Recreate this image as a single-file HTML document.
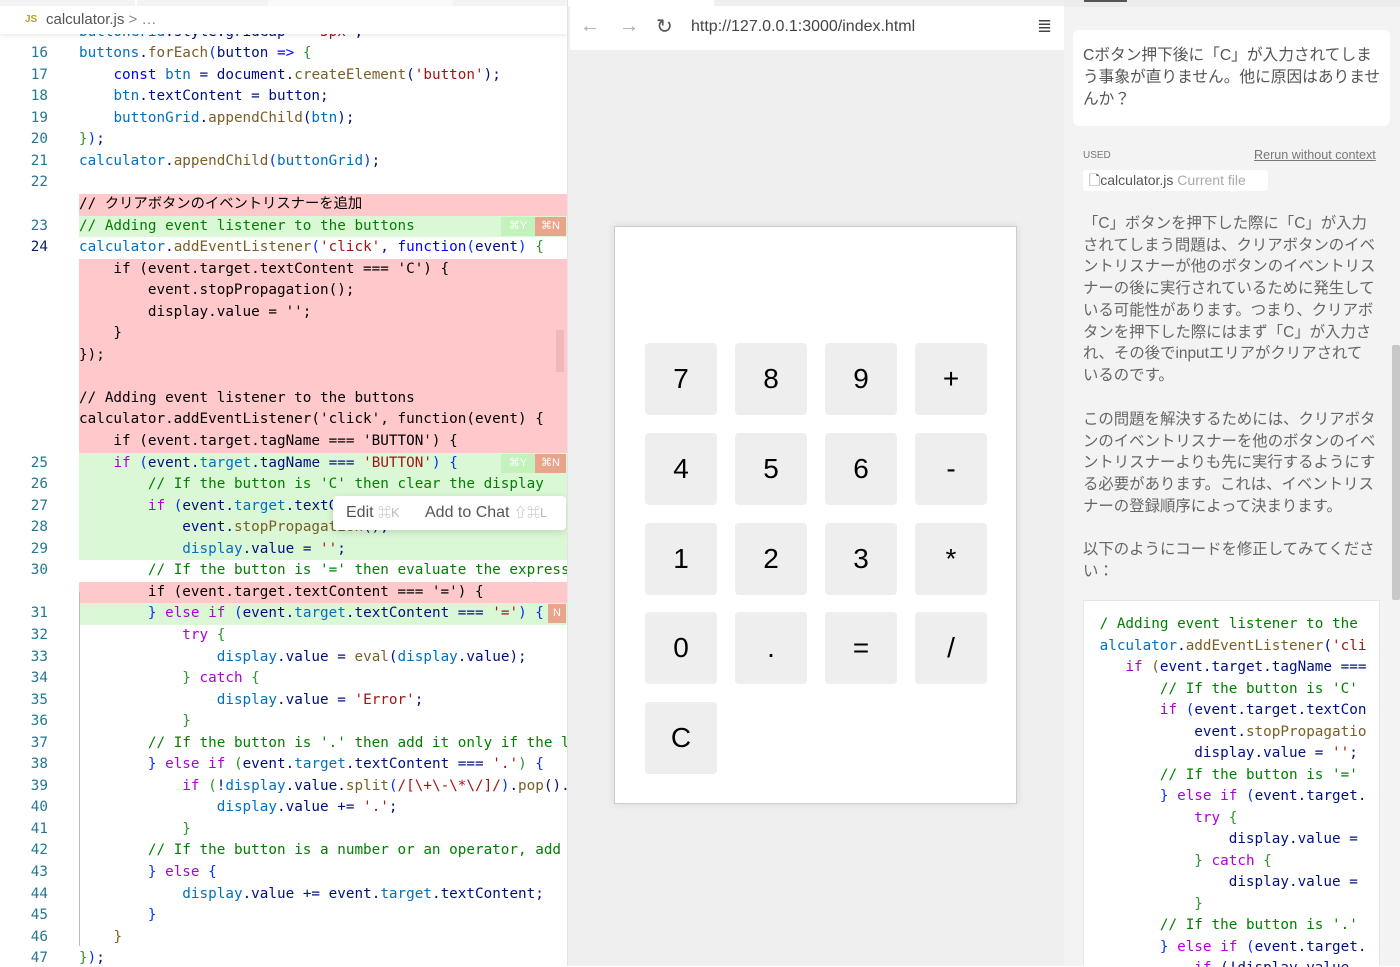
<!DOCTYPE html>
<html><head><meta charset="utf-8"><style>
*{margin:0;padding:0;box-sizing:border-box}
body{width:1400px;height:966px;overflow:hidden;background:#fff;font-family:"Liberation Sans","Noto Sans CJK JP",sans-serif;position:relative}
.mono{font-family:"DejaVu Sans Mono","Liberation Mono","Noto Sans CJK JP",monospace}
#ed{position:absolute;left:0;top:0;width:567px;height:966px;overflow:hidden;background:#fff}
.row{position:absolute;left:0;width:567px;height:21.55px;line-height:21.55px;font-size:14.3px;white-space:pre;color:#001080;font-family:"DejaVu Sans Mono","Liberation Mono","Noto Sans CJK JP",monospace}
.row .n{position:absolute;left:0;width:48px;text-align:right;color:#237893}
.row .c{position:absolute;left:79px;right:0;top:0;height:100%;overflow:hidden}
.del .c{background:#ffc9cc}
.add .c{background:#dbf8d6}
.k{color:#0000ff}.p{color:#af00db}.f{color:#795e26}.s{color:#a31515}.cm{color:#008000}.v{color:#0070c1}.d{color:#001080}.t{color:#267f99}.g{color:#319331}.b{color:#0431fa}.x{color:#000}
.badge{position:absolute;height:19px;top:1px;font-size:11px;line-height:19px;color:#fff;text-align:center;font-family:"Liberation Sans",sans-serif}
#crumb{position:absolute;left:0;top:6px;width:567px;height:28px;background:#fff;box-shadow:0 2px 4px rgba(0,0,0,.08);z-index:5;font-size:15px;color:#555;line-height:28px}
#tabs{position:absolute;left:0;top:0;width:567px;height:6px;background:#f3f3f3;z-index:6}
#br{position:absolute;left:567px;top:0;width:497px;height:966px;background:#efefef;border-left:1px solid #e4e4e4}
#bar{position:absolute;left:2px;top:6px;width:495px;height:44px;background:#fff}
#calc{position:absolute;left:46px;top:226px;width:403px;height:578px;background:#fff;border:1px solid #ccc;box-shadow:0 0 8px rgba(0,0,0,.1)}
.bt{position:absolute;width:72px;height:72px;background:#eee;border-radius:4px;font-size:28px;text-align:center;line-height:72px;color:#000}
#rp{position:absolute;left:1064px;top:0;width:336px;height:966px;background:#f3f3f3}
.ans{position:absolute;left:19px;font-size:15.4px;color:#666;line-height:21.7px;white-space:nowrap}
.rc{position:absolute;left:8px;height:21.5px;line-height:21.5px;font-size:14.3px;white-space:pre;color:#001080}
</style></head><body>
<div id="ed">
<div id="tabs"><div style="position:absolute;left:135px;top:0;width:2px;height:6px;background:#fff"></div><div style="position:absolute;left:268px;top:0;width:185px;height:6px;background:#fafafa"></div></div>
<div id="crumb"><span style="position:absolute;left:25px;top:0;font-size:10px;font-weight:bold;color:#b5a02a">JS</span><span style="position:absolute;left:46px">calculator.js <span style="color:#888">&gt; …</span></span></div>
<div style="position:absolute;left:0;top:21.6px;width:567px">
<div class="row" style="top:0"><span class="c"><span class="v">buttonGrid</span>.<span class="d">style</span>.<span class="d">gridGap</span> = <span class="s">'5px'</span>;</span></div>
<div class="row" style="top:21.55px"><span class="n">16</span><span class="c"><span class="v">buttons</span>.<span class="f">forEach</span><span class="b">(</span><span class="d">button</span> <span class="k">=&gt;</span> <span class="g">{</span></span></div>
<div class="row" style="top:43.1px"><span class="n">17</span><span class="c">    <span class="k">const</span> <span class="v">btn</span> = <span class="d">document</span>.<span class="f">createElement</span>(<span class="s">'button'</span>);</span></div>
<div class="row" style="top:64.65px"><span class="n">18</span><span class="c">    <span class="v">btn</span>.<span class="d">textContent</span> = <span class="d">button</span>;</span></div>
<div class="row" style="top:86.2px"><span class="n">19</span><span class="c">    <span class="v">buttonGrid</span>.<span class="f">appendChild</span>(<span class="v">btn</span>);</span></div>
<div class="row" style="top:107.75px"><span class="n">20</span><span class="c"><span class="g">}</span><span class="b">)</span>;</span></div>
<div class="row" style="top:129.3px"><span class="n">21</span><span class="c"><span class="v">calculator</span>.<span class="f">appendChild</span><span class="b">(</span><span class="v">buttonGrid</span><span class="b">)</span>;</span></div>
<div class="row" style="top:150.85px"><span class="n">22</span><span class="c"></span></div>
<div class="row del" style="top:172.4px"><span class="c x">// クリアボタンのイベントリスナーを追加</span></div>
<div class="row add" style="top:193.95px"><span class="n">23</span><span class="c cm">// Adding event listener to the buttons</span><span class="badge" style="left:501px;width:34px;background:#c3f2bc">⌘Y</span><span class="badge" style="left:535px;width:31px;background:#e9a58c">⌘N</span></div>
<div class="row" style="top:215.5px"><span class="n" style="color:#0b216f">24</span><span class="c"><span class="v">calculator</span>.<span class="f">addEventListener</span><span class="b">(</span><span class="s">'click'</span>, <span class="k">function</span><span class="b">(</span><span class="d">event</span><span class="b">)</span> <span class="g">{</span></span></div>
<div class="row del" style="top:237.05px"><span class="c x">    if (event.target.textContent === 'C') {</span></div>
<div class="row del" style="top:258.6px"><span class="c x">        event.stopPropagation();</span></div>
<div class="row del" style="top:280.15px"><span class="c x">        display.value = '';</span></div>
<div class="row del" style="top:301.7px"><span class="c x">    }</span></div>
<div class="row del" style="top:323.25px"><span class="c x">});</span></div>
<div class="row del" style="top:344.8px"><span class="c x"></span></div>
<div class="row del" style="top:366.35px"><span class="c x">// Adding event listener to the buttons</span></div>
<div class="row del" style="top:387.9px"><span class="c x">calculator.addEventListener('click', function(event) {</span></div>
<div class="row del" style="top:409.45px"><span class="c x">    if (event.target.tagName === 'BUTTON') {</span></div>
<div class="row add" style="top:431px"><span class="n">25</span><span class="c">    <span class="p">if</span> <span class="b">(</span><span class="d">event</span>.<span class="v">target</span>.<span class="d">tagName</span> === <span class="s">'BUTTON'</span><span class="b">)</span> <span class="b">{</span></span><span class="badge" style="left:501px;width:34px;background:#c3f2bc">⌘Y</span><span class="badge" style="left:535px;width:31px;background:#e9a58c">⌘N</span></div>
<div class="row add" style="top:452.55px"><span class="n">26</span><span class="c">        <span class="cm">// If the button is 'C' then clear the display</span></span></div>
<div class="row add" style="top:474.1px"><span class="n">27</span><span class="c">        <span class="p">if</span> <span class="b">(</span><span class="d">event</span>.<span class="v">target</span>.<span class="d">textContent</span> === <span class="s">'C'</span><span class="b">)</span> <span class="b">{</span></span></div>
<div class="row add" style="top:495.65px"><span class="n">28</span><span class="c">            <span class="d">event</span>.<span class="f">stopPropagation</span>();</span></div>
<div class="row add" style="top:517.2px"><span class="n">29</span><span class="c">            <span class="v">display</span>.<span class="d">value</span> = <span class="s">''</span>;</span></div>
<div class="row" style="top:538.75px"><span class="n">30</span><span class="c">        <span class="cm">// If the button is '=' then evaluate the expression</span></span></div>
<div class="row del" style="top:560.3px"><span class="c x">        if (event.target.textContent === '=') {</span></div>
<div class="row add" style="top:581.85px"><span class="n">31</span><span class="c">        <span class="b">}</span> <span class="p">else if</span> <span class="b">(</span><span class="d">event</span>.<span class="v">target</span>.<span class="d">textContent</span> === <span class="s">'='</span><span class="b">)</span> <span class="b">{</span></span><span class="badge" style="left:548px;width:18px;background:#e9a58c">N</span></div>
<div class="row" style="top:603.4px"><span class="n">32</span><span class="c">            <span class="p">try</span> <span class="g">{</span></span></div>
<div class="row" style="top:624.95px"><span class="n">33</span><span class="c">                <span class="v">display</span>.<span class="d">value</span> = <span class="f">eval</span>(<span class="v">display</span>.<span class="d">value</span>);</span></div>
<div class="row" style="top:646.5px"><span class="n">34</span><span class="c">            <span class="g">}</span> <span class="p">catch</span> <span class="g">{</span></span></div>
<div class="row" style="top:668.05px"><span class="n">35</span><span class="c">                <span class="v">display</span>.<span class="d">value</span> = <span class="s">'Error'</span>;</span></div>
<div class="row" style="top:689.6px"><span class="n">36</span><span class="c">            <span class="g">}</span></span></div>
<div class="row" style="top:711.15px"><span class="n">37</span><span class="c">        <span class="cm">// If the button is '.' then add it only if the last</span></span></div>
<div class="row" style="top:732.7px"><span class="n">38</span><span class="c">        <span class="b">}</span> <span class="p">else if</span> <span class="g">(</span><span class="d">event</span>.<span class="v">target</span>.<span class="d">textContent</span> === <span class="s">'.'</span><span class="g">)</span> <span class="b">{</span></span></div>
<div class="row" style="top:754.25px"><span class="n">39</span><span class="c">            <span class="p">if</span> <span class="g">(</span>!<span class="v">display</span>.<span class="d">value</span>.<span class="f">split</span><span class="b">(</span><span class="s">/[\+\-\*\/]/</span><span class="b">)</span>.<span class="f">pop</span>().includes</span></div>
<div class="row" style="top:775.8px"><span class="n">40</span><span class="c">                <span class="v">display</span>.<span class="d">value</span> += <span class="s">'.'</span>;</span></div>
<div class="row" style="top:797.35px"><span class="n">41</span><span class="c">            <span class="g">}</span></span></div>
<div class="row" style="top:818.9px"><span class="n">42</span><span class="c">        <span class="cm">// If the button is a number or an operator, add it</span></span></div>
<div class="row" style="top:840.45px"><span class="n">43</span><span class="c">        <span class="b">}</span> <span class="p">else</span> <span class="b">{</span></span></div>
<div class="row" style="top:862px"><span class="n">44</span><span class="c">            <span class="v">display</span>.<span class="d">value</span> += <span class="d">event</span>.<span class="v">target</span>.<span class="d">textContent</span>;</span></div>
<div class="row" style="top:883.55px"><span class="n">45</span><span class="c">        <span class="b">}</span></span></div>
<div class="row" style="top:905.1px"><span class="n">46</span><span class="c">    <span class="f">}</span></span></div>
<div class="row" style="top:926.65px"><span class="n">47</span><span class="c"><span class="g">}</span><span class="b">)</span>;</span></div>
</div>
<div style="position:absolute;left:79px;top:592px;width:1px;height:354px;background:#bbb"></div>
<div style="position:absolute;left:556px;top:330px;width:8px;height:42px;background:#f0b8b8"></div>
<div style="position:absolute;left:333px;top:496px;width:233px;height:34px;background:#fff;border-radius:4px;box-shadow:0 2px 8px rgba(0,0,0,.15);font-size:16px;line-height:34px;color:#555;z-index:7"><span style="position:absolute;left:13px">Edit <span style="color:#bbb;font-size:13px">⌘K</span></span><span style="position:absolute;left:92px">Add to Chat <span style="color:#bbb;font-size:13px">⇧⌘L</span></span></div>
</div>
<div id="br">
<div style="position:absolute;left:0;top:0;width:146px;height:6px;background:#fff"></div>
<div id="bar">
<span style="position:absolute;left:10px;top:9px;font-size:20px;color:#aaa">←</span>
<span style="position:absolute;left:49px;top:9px;font-size:20px;color:#aaa">→</span>
<span style="position:absolute;left:86px;top:8px;font-size:20px;color:#555">↻</span>
<span style="position:absolute;left:121px;top:12px;font-size:16px;color:#444">http://127.0.0.1:3000/index.html</span>
<span style="position:absolute;left:467px;top:10px;font-size:18px;color:#444">≣</span>
</div>
<div id="calc">
<div class="bt" style="left:30px;top:116px">7</div><div class="bt" style="left:120px;top:116px">8</div><div class="bt" style="left:210px;top:116px">9</div><div class="bt" style="left:300px;top:116px">+</div>
<div class="bt" style="left:30px;top:206px">4</div><div class="bt" style="left:120px;top:206px">5</div><div class="bt" style="left:210px;top:206px">6</div><div class="bt" style="left:300px;top:206px">-</div>
<div class="bt" style="left:30px;top:296px">1</div><div class="bt" style="left:120px;top:296px">2</div><div class="bt" style="left:210px;top:296px">3</div><div class="bt" style="left:300px;top:296px">*</div>
<div class="bt" style="left:30px;top:385px">0</div><div class="bt" style="left:120px;top:385px">.</div><div class="bt" style="left:210px;top:385px">=</div><div class="bt" style="left:300px;top:385px">/</div>
<div class="bt" style="left:30px;top:475px">C</div>
</div>
</div>
<div id="rp">
<div style="position:absolute;left:0;top:0;width:336px;height:7px;background:#ececec"></div>
<div style="position:absolute;left:20px;top:0;width:43px;height:2px;background:#555"></div>
<div style="position:absolute;left:9px;top:30px;width:317px;height:96px;background:#fff;border-radius:6px"></div>
<div style="position:absolute;left:19px;top:45px;font-size:15.7px;line-height:22px;color:#555;white-space:nowrap">Cボタン押下後に「C」が入力されてしま<br>う事象が直りません。他に原因はありませ<br>んか？</div>
<div style="position:absolute;left:19px;top:150px;font-size:10px;color:#777">USED</div>
<div style="position:absolute;left:190px;top:148px;font-size:12.6px;color:#777;text-decoration:underline">Rerun without context</div>
<div style="position:absolute;left:19px;top:170px;width:185px;height:21px;background:#fff;border-radius:3px;font-size:14px;line-height:21px;color:#555;padding-left:6px;white-space:nowrap">🗋calculator.js <span style="color:#aaa">Current file</span></div>
<div class="ans" style="top:213px">「C」ボタンを押下した際に「C」が入力<br>されてしまう問題は、クリアボタンのイベ<br>ントリスナーが他のボタンのイベントリス<br>ナーの後に実行されているために発生して<br>いる可能性があります。つまり、クリアボ<br>タンを押下した際にはまず「C」が入力さ<br>れ、その後でinputエリアがクリアされて<br>いるのです。</div>
<div class="ans" style="top:409px">この問題を解決するためには、クリアボタ<br>ンのイベントリスナーを他のボタンのイベ<br>ントリスナーよりも先に実行するようにす<br>る必要があります。これは、イベントリス<br>ナーの登録順序によって決まります。</div>
<div class="ans" style="top:539px">以下のようにコードを修正してみてくださ<br>い：</div>
<div style="position:absolute;left:19px;top:600px;width:297px;height:366px;background:#fff;border:1px solid #e6e6e6;border-bottom:none">
<div class="mono" style="position:absolute;left:15px;top:13px;width:268px;height:353px;overflow:hidden">
<div class="rc" style="top:0;left:-8px"><span class="cm">// Adding event listener to the buttons</span></div>
<div class="rc" style="top:21.5px;left:-8px"><span class="v">calculator</span>.<span class="f">addEventListener</span>(<span class="s">'click'</span></div>
<div class="rc" style="top:43px;left:-8px">    <span class="p">if</span> <span class="f">(</span>event.target.tagName ===</div>
<div class="rc" style="top:64.5px;left:-8px">        <span class="cm">// If the button is 'C'</span></div>
<div class="rc" style="top:86px;left:-8px">        <span class="p">if</span> <span class="b">(</span>event.target.textContent</div>
<div class="rc" style="top:107.5px;left:-8px">            event.<span class="f">stopPropagation</span></div>
<div class="rc" style="top:129px;left:-8px">            display.value = <span class="s">''</span>;</div>
<div class="rc" style="top:150.5px;left:-8px">        <span class="cm">// If the button is '='</span></div>
<div class="rc" style="top:172px;left:-8px">        <span class="b">}</span> <span class="p">else if</span> <span class="b">(</span>event.target.</div>
<div class="rc" style="top:193.5px;left:-8px">            <span class="p">try</span> <span class="g">{</span></div>
<div class="rc" style="top:215px;left:-8px">                display.value =</div>
<div class="rc" style="top:236.5px;left:-8px">            <span class="g">}</span> <span class="p">catch</span> <span class="g">{</span></div>
<div class="rc" style="top:258px;left:-8px">                display.value =</div>
<div class="rc" style="top:279.5px;left:-8px">            <span class="g">}</span></div>
<div class="rc" style="top:301px;left:-8px">        <span class="cm">// If the button is '.'</span></div>
<div class="rc" style="top:322.5px;left:-8px">        <span class="b">}</span> <span class="p">else if</span> <span class="b">(</span>event.target.</div>
<div class="rc" style="top:344px;left:-8px">            <span class="p">if</span> (!display.value</div>
</div></div>
<div style="position:absolute;left:328px;top:345px;width:8px;height:255px;background:#c8c8c8;border-radius:2px"></div>
</div>
</body></html>
